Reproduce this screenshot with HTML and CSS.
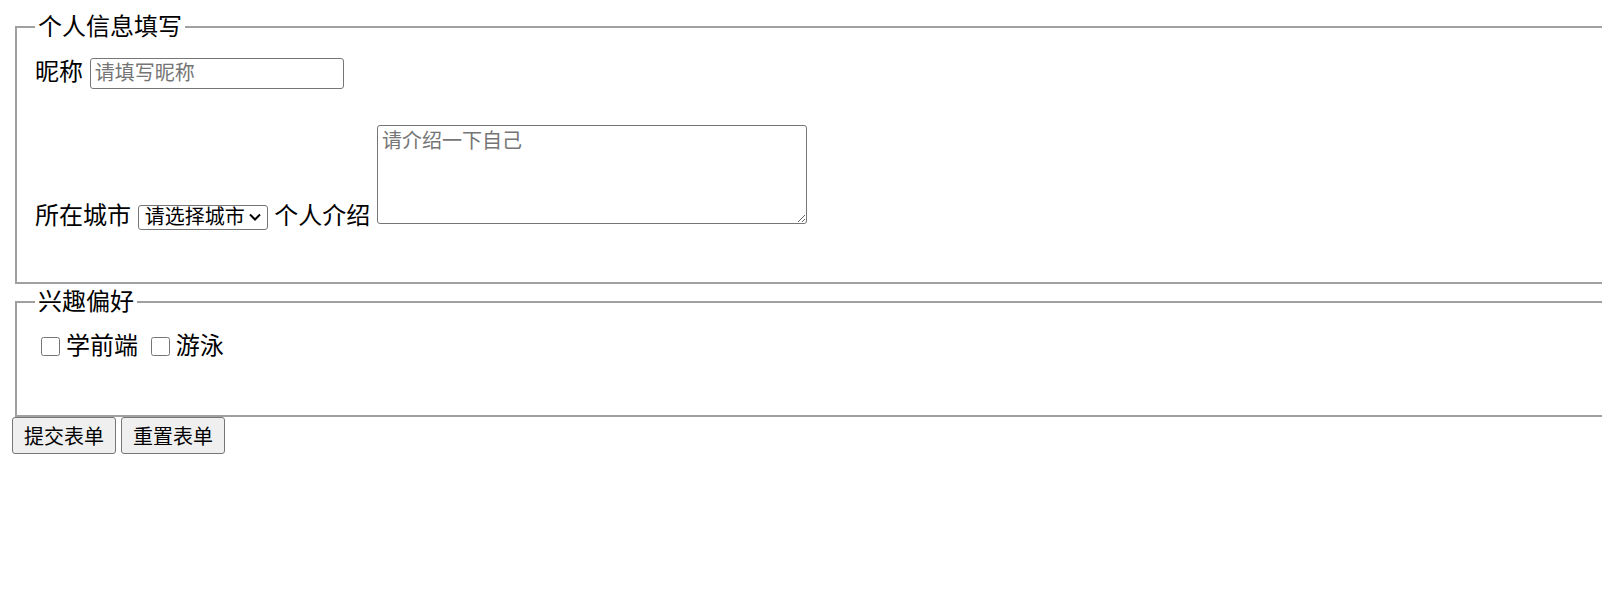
FILE: index.html
```html
<!DOCTYPE html>
<html lang="zh-CN">
<head>
    <meta charset="UTF-8">
    <meta name="viewport" content="width=device-width, initial-scale=1.0">
    <title>个人信息</title>
    <link rel="stylesheet" href="styles.css">
</head>
<body>
    <form class="profile-form">
        <fieldset class="form-section info-section">
            <legend>个人信息填写</legend>
            <div class="form-row">
                <label for="nickname">昵称</label>
                <input type="text" id="nickname" class="text-input" placeholder="请填写昵称">
            </div>
            <div class="form-row">
                <label for="city">所在城市</label>
                <select id="city" class="city-select">
                    <option value="">请选择城市</option>
                    <option value="bj">北京</option>
                    <option value="sh">上海</option>
                    <option value="gz">广州</option>
                </select>
                <label for="intro">个人介绍</label>
                <textarea id="intro" class="intro-box" placeholder="请介绍一下自己"></textarea>
            </div>
        </fieldset>

        <fieldset class="form-section hobby-section">
            <legend>兴趣偏好</legend>
            <div class="form-row">
                <label><input type="checkbox" class="check" name="hobby" value="frontend">学前端</label>
                <label><input type="checkbox" class="check" name="hobby" value="swim">游泳</label>
            </div>
        </fieldset>

        <div class="form-actions">
            <button type="submit" class="btn">提交表单</button>
            <button type="reset" class="btn">重置表单</button>
        </div>
    </form>
</body>
</html>
```

FILE: styles.css
```css
html, body {
    overflow: hidden;
}
body {
    margin: 12px;
    font-family: "Liberation Sans", "Noto Sans CJK SC", sans-serif;
    font-size: 24px;
    color: #000;
    background: #fff;
}
.profile-form {
    width: 1700px;
}
.form-section {
    margin: 0 3px;
    padding: 13px 18px 16px;
    border: 2px solid #a0a0a0;
}
.hobby-section {
    margin-top: 3px;
    padding-top: 12px;
}
legend {
    padding: 0 3px;
    line-height: 30px;
}
.form-row {
    line-height: 34px;
    margin-bottom: 36px;
}
.form-row:last-child {
    margin-bottom: 33px;
}
.hobby-section .form-row {
    margin-bottom: 36px;
}
.text-input,
.city-select,
.intro-box {
    font-family: "Liberation Sans", "Noto Sans CJK SC", sans-serif;
    font-size: 20px;
    border: 1px solid #767676;
    border-radius: 3px;
    margin: 0;
    box-sizing: border-box;
}
.text-input {
    width: 254px;
    height: 31px;
    padding: 1px 4px;
}
.text-input::placeholder,
.intro-box::placeholder {
    color: #757575;
}
.city-select {
    appearance: none;
    width: 130px;
    height: 25px;
    padding: 0 22px 0 6px;
    color: #000;
    background: #fff url("data:image/svg+xml,%3Csvg xmlns='http://www.w3.org/2000/svg' width='12' height='8' viewBox='0 0 12 8'%3E%3Cpath d='M1 1.5l5 5 5-5' fill='none' stroke='%23000' stroke-width='2'/%3E%3C/svg%3E") no-repeat right 6px center;
}
.intro-box {
    width: 430px;
    height: 99px;
    padding: 2px 4px;
    line-height: 26px;
    vertical-align: baseline;
}
.check {
    width: 19px;
    height: 19px;
    margin: 4px 6px 4px 6px;
    vertical-align: -2px;
}
.form-actions {
    display: flex;
    gap: 5px;
}
.btn {
    height: 37px;
    padding: 0 11px;
    font-family: "Liberation Sans", "Noto Sans CJK SC", sans-serif;
    font-size: 20px;
    color: #000;
    background: #efefef;
    border: 1px solid #767676;
    border-radius: 3px;
}
```
